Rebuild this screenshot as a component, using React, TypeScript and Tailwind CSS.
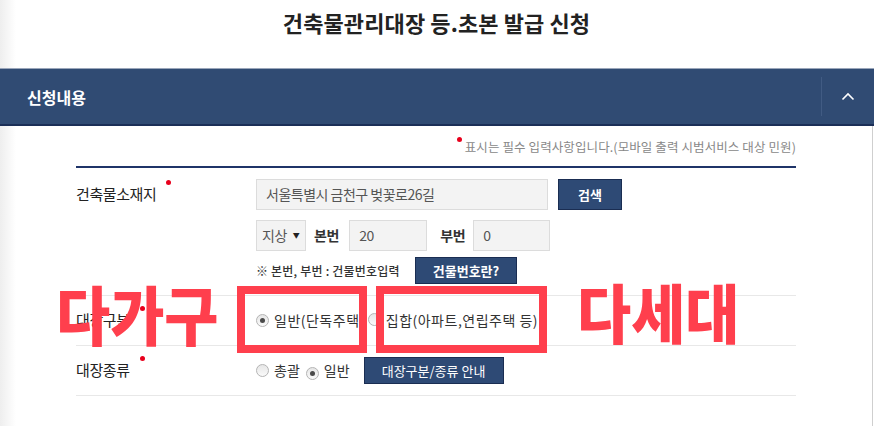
import React from "react";

const FONT = { fontFamily: '"Noto Sans CJK KR", "Noto Sans", sans-serif' };

function Dot({ className = "" }: { className?: string }) {
  return <span className={"inline-block w-[5px] h-[5px] rounded-full bg-[#e8001c] " + className} />;
}

function Radio({ checked }: { checked?: boolean }) {
  return (
    <span className="inline-flex items-center justify-center w-[13px] h-[13px] rounded-full border border-[#b4b4b4] bg-[linear-gradient(#e6e6e6,#fafafa)] shrink-0">
      {checked && <span className="w-[5px] h-[5px] rounded-full bg-[#4a4a4a]" />}
    </span>
  );
}

function NavyButton({ children, className = "" }: { children: React.ReactNode; className?: string }) {
  return (
    <div
      className={
        "flex items-center justify-center bg-[#2e4a75] border border-[#1a2d52] text-white text-[13px] font-bold " +
        className
      }
    >
      {children}
    </div>
  );
}

function Field({ children, className = "" }: { children: React.ReactNode; className?: string }) {
  return (
    <div
      className={
        "flex items-center bg-[#f3f3f3] border border-[#dcdcdc] text-[14px] text-[#555] tracking-[-0.5px] " + className
      }
    >
      {children}
    </div>
  );
}

function Label({ text }: { text: string }) {
  return (
    <div className="w-[180px] h-[31px] flex items-center shrink-0">
      <span className="text-[15px] text-[#222] tracking-[-0.4px]">{text}</span>
      <Dot className="ml-[10px] mb-[24px]" />
    </div>
  );
}

export default function App() {
  return (
    <div
      style={FONT}
      className="relative w-[880px] h-[426px] overflow-hidden bg-[linear-gradient(to_right,#eeeeee,#ffffff_16px)]"
    >
      {/* title */}
      <div className="w-[873px] h-[68px] flex justify-center pt-[6px]">
        <h1 className="text-[22px] font-bold text-[#222] tracking-[0.1px] leading-[32px]">
          건축물관리대장 등.초본 발급 신청
        </h1>
      </div>

      {/* section header */}
      <div className="w-[874px] h-[58px] flex items-center bg-[#304b73] border-t border-t-[#9aa6ba] border-b-2 border-b-[#1b2f57]">
        <div className="flex-1 pl-[27px] text-white text-[16px] font-bold tracking-[0px]">신청내용</div>
        <div className="w-px h-[39px] bg-[#415b83]" />
        <div className="w-[52px] flex items-center justify-center">
          <svg width="14" height="9" viewBox="0 0 14 9" fill="none">
            <path d="M1.5 7.5 L7 2 L12.5 7.5" stroke="white" strokeWidth="1.6" />
          </svg>
        </div>
      </div>

      {/* content */}
      <div className="w-[873px] h-[300px] border-r border-[#cfcfcf] pl-[76px]">
        <div className="w-[720px]">
          {/* required note */}
          <div className="h-[40px] flex items-center justify-end pt-[2px]">
            <Dot className="mb-[16px] mr-[3px]" />
            <span className="text-[12.5px] text-[#888] tracking-[0.1px]">
              표시는 필수 입력사항입니다.(모바일 출력 시범서비스 대상 민원)
            </span>
          </div>
          <div className="h-[2px] bg-[#1f3468]" />

          {/* row 1 */}
          <div className="flex border-b border-[#e8e8e8] pt-[11px] pb-[11px]">
            <Label text="건축물소재지" />
            <div className="flex flex-col">
              <div className="flex gap-[10px]">
                <Field className="w-[292px] h-[31px] pl-[9px]">서울특별시 금천구 벚꽃로26길</Field>
                <NavyButton className="w-[64px] h-[31px]">검색</NavyButton>
              </div>
              <div className="flex items-center mt-[10px]">
                <Field className="w-[50px] h-[31px] pl-[5px] text-[#333]">
                  지상<span className="ml-[6px] text-[7px] text-[#222]">▼</span>
                </Field>
                <span className="ml-[8px] text-[14px] font-bold text-[#333] tracking-[-0.3px]">본번</span>
                <Field className="ml-[10px] w-[78px] h-[31px] pl-[9px] text-[#444]">20</Field>
                <span className="ml-[13px] text-[14px] font-bold text-[#333] tracking-[-0.3px]">부번</span>
                <Field className="ml-[8px] w-[77px] h-[31px] pl-[9px] text-[#444]">0</Field>
              </div>
              <div className="flex items-center mt-[6px]">
                <span className="w-[159px] text-[12px] font-medium text-[#333] tracking-[0.2px]">
                  ※ 본번, 부번 : 건물번호입력
                </span>
                <NavyButton className="w-[102px] h-[27px] text-[12px]">건물번호란?</NavyButton>
              </div>
            </div>
          </div>

          {/* row 2 */}
          <div className="h-[50px] flex items-center border-b border-[#e8e8e8]">
            <Label text="대장구분" />
            <div className="flex items-center text-[14px] text-[#333] tracking-[0.5px]">
              <Radio checked />
              <span className="ml-[5px]">일반(단독주택)</span>
              <span className="ml-[3px]">
                <Radio />
              </span>
              <span className="ml-[5px]">집합(아파트,연립주택 등)</span>
            </div>
          </div>

          {/* row 3 */}
          <div className="h-[50px] flex items-center border-b border-[#e8e8e8]">
            <Label text="대장종류" />
            <div className="flex items-center text-[14px] text-[#333] tracking-[0px]">
              <Radio />
              <span className="ml-[5px]">총괄</span>
              <span className="ml-[6px]">
                <Radio checked />
              </span>
              <span className="ml-[5px]">일반</span>
              <NavyButton className="ml-[14px] w-[140px] h-[27px] font-normal text-[13px]">
                대장구분/종류 안내
              </NavyButton>
            </div>
          </div>
        </div>
      </div>

      {/* annotations overlay */}
      <div className="absolute left-[56px] top-[276px] origin-left scale-x-[0.92] text-[64px] leading-[72px] font-black text-[#ff3f4d] tracking-[0px] whitespace-nowrap">
        다가구
      </div>
      <div className="absolute left-[577px] top-[274px] origin-left scale-x-[0.92] text-[64px] leading-[72px] font-black text-[#ff3f4d] tracking-[0px] whitespace-nowrap">
        다세대
      </div>
      <div className="absolute left-[237px] top-[286px] w-[130px] h-[67px] border-[8px] border-[#ff3f4d]" />
      <div className="absolute left-[376px] top-[286px] w-[171px] h-[67px] border-[8px] border-[#ff3f4d]" />
    </div>
  );
}
